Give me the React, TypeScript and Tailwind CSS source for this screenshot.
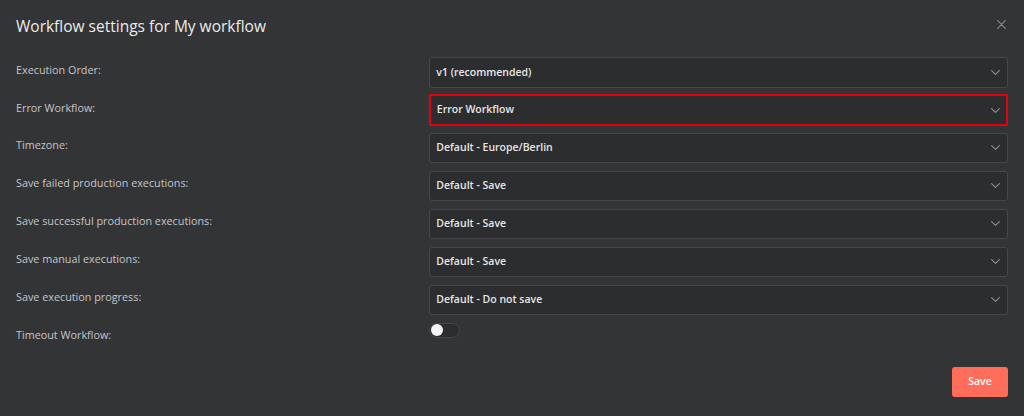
import React from "react";

const rows: { label: string; value: string; highlight?: boolean }[] = [
  { label: "Execution Order:", value: "v1 (recommended)" },
  { label: "Error Workflow:", value: "Error Workflow", highlight: true },
  { label: "Timezone:", value: "Default - Europe/Berlin" },
  { label: "Save failed production executions:", value: "Default - Save" },
  { label: "Save successful production executions:", value: "Default - Save" },
  { label: "Save manual executions:", value: "Default - Save" },
  { label: "Save execution progress:", value: "Default - Do not save" },
];

function Chevron() {
  return (
    <svg width="9" height="5" viewBox="0 0 9 5" fill="none" className="shrink-0">
      <path d="M0.6 0.6 L4.5 4.3 L8.4 0.6" stroke="#8e8f91" strokeWidth="1.1" strokeLinecap="round" strokeLinejoin="round" />
    </svg>
  );
}

export default function App() {
  return (
    <div
      className="w-[1024px] h-[416px] bg-[#333436] relative flex flex-col px-4 pt-[16px] pb-[18.7px] overflow-hidden"
      style={{ fontFamily: '"Open Sans", "Liberation Sans", sans-serif' }}
    >
      <div className="text-[15.5px] leading-[20.4px] text-[#ebebeb]">Workflow settings for My workflow</div>
      <button className="absolute right-[17px] top-[18px] w-[12px] h-[12px] flex items-center justify-center">
        <svg width="9" height="9" viewBox="0 0 9 9" fill="none">
          <path d="M0.7 0.7 L8.3 8.3 M8.3 0.7 L0.7 8.3" stroke="#8a8b8d" strokeWidth="1.1" strokeLinecap="round" />
        </svg>
      </button>

      <div className="mt-[20.8px] flex flex-col gap-[7.5px]">
        {rows.map((r) => (
          <div key={r.label} className="flex">
            <div className="w-5/12 pt-[5.5px] text-[10.8px] leading-[14.3px] text-[#c5c6c8]">{r.label}</div>
            <div className="w-7/12">
              <div
                className={
                  r.highlight
                    ? "h-[32px] -my-[1px] border-2 border-[#e4000f] bg-[#2c2d2e] flex items-center justify-between pl-[5.5px] pr-[6px]"
                    : "h-[30.5px] border border-[#464749] rounded-[3px] bg-[#2c2d2e] flex items-center justify-between pl-[6px] pr-[7px]"
                }
              >
                <span className="text-[10.5px] font-semibold text-[#e6e6e6]">{r.value}</span>
                <Chevron />
              </div>
            </div>
          </div>
        ))}
        <div className="flex">
          <div className="w-5/12 pt-[5.5px] text-[10.8px] leading-[14.3px] text-[#c5c6c8]">Timeout Workflow:</div>
          <div className="w-7/12">
            <div className="w-[30.5px] h-[15px] rounded-full border border-[#46474a] bg-[#2c2d2e] flex items-center pl-[0.5px]">
              <div className="w-[12.5px] h-[12.5px] rounded-full bg-[#f3f3f8]" />
            </div>
          </div>
        </div>
      </div>

      <div className="mt-auto flex justify-end">
        <button className="w-[56px] h-[30px] rounded-[3px] bg-[#ff6d5a] text-white text-[10.5px] font-semibold flex items-center justify-center">
          Save
        </button>
      </div>
    </div>
  );
}
